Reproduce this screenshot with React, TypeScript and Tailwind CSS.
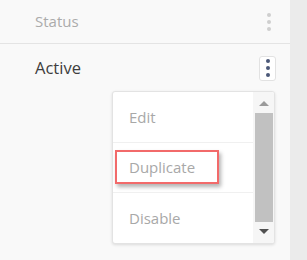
function Dots({ color }: { color: string }) {
  return (
    <div className="flex flex-col items-center gap-[3px]">
      <span className={`block w-[4px] h-[4px] rounded-full ${color}`}></span>
      <span className={`block w-[4px] h-[4px] rounded-full ${color}`}></span>
      <span className={`block w-[4px] h-[4px] rounded-full ${color}`}></span>
    </div>
  );
}

export default function App() {
  return (
    <div className="w-[307px] h-[260px] flex font-['Open_Sans','Liberation_Sans',sans-serif] overflow-hidden">
      <div className="relative w-[290px] h-full bg-[#f9f9f9]">
        {/* Cabecera */}
        <div className="h-[44px] border-b border-[#e4e4e4] flex items-center justify-between pl-[35px] pr-[19px]">
          <span className="text-[15px] text-[#ababab]">Status</span>
          <Dots color="bg-[#cfcfcf]" />
        </div>

        {/* Fila */}
        <div className="h-[48px] flex items-center justify-between pl-[35px] pr-[14px]">
          <span className="text-[16.5px] text-[#3e3e3e]">Active</span>
          <button className="w-[17px] h-[25px] flex items-center justify-center rounded-[3px] border border-[#e2e2e2] bg-white">
            <Dots color="bg-[#4b5878]" />
          </button>
        </div>

        {/* Menú desplegable */}
        <div className="absolute left-[112px] top-[91px] w-[163px] h-[153px] bg-white rounded-[3px] border border-[#e3e3e3] shadow-[0_1px_3px_rgba(0,0,0,0.12)] flex overflow-hidden">
          <div className="flex-1 flex flex-col">
            <div className="h-[51px] flex items-center pl-[16px] border-b border-[#f0f0f0] text-[15px] text-[#a8a8a8]">Edit</div>
            <div className="h-[50px] flex items-center pl-[16px] border-b border-[#f0f0f0] text-[15px] text-[#a8a8a8]">Duplicate</div>
            <div className="flex-1 flex items-center pl-[16px] text-[15px] text-[#a8a8a8]">Disable</div>
          </div>
          <div className="w-[21px] bg-[#f6f6f6] flex flex-col items-center py-[9px]">
            <span className="w-0 h-0 border-l-[5px] border-r-[5px] border-b-[5px] border-l-transparent border-r-transparent border-b-[#9a9a9a]"></span>
            <div className="w-[18px] flex-1 bg-[#c1c1c1] my-[7px]"></div>
            <span className="w-0 h-0 border-l-[5px] border-r-[5px] border-t-[5px] border-l-transparent border-r-transparent border-t-[#505050]"></span>
          </div>

          {/* Marco rojo */}
          <div className="absolute left-[2px] top-[58px] w-[104px] h-[34px] border-2 border-[#f26a6a] shadow-[2px_3px_4px_rgba(0,0,0,0.3)]"></div>
        </div>
      </div>
      <div className="flex-1 bg-[#ebebeb]"></div>
    </div>
  );
}
